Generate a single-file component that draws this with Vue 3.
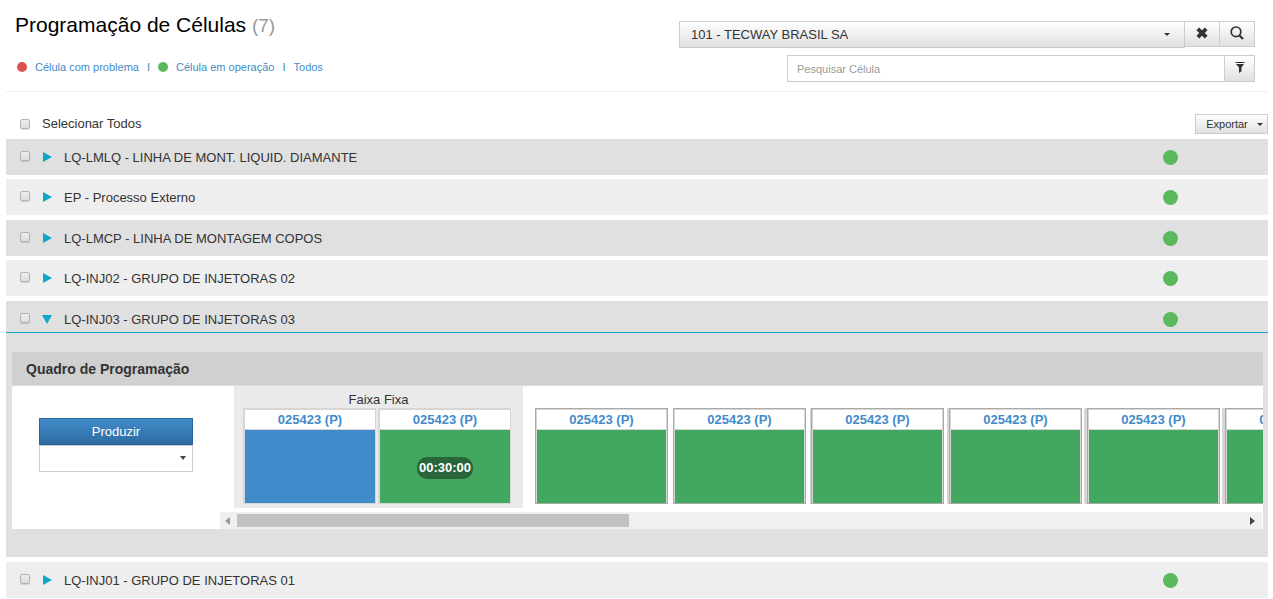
<script setup>
import { ref } from 'vue'

const cells = [
  { name: 'LQ-LMLQ - LINHA DE MONT. LIQUID. DIAMANTE' },
  { name: 'EP - Processo Externo' },
  { name: 'LQ-LMCP - LINHA DE MONTAGEM COPOS' },
  { name: 'LQ-INJ02 - GRUPO DE INJETORAS 02' },
  { name: 'LQ-INJ03 - GRUPO DE INJETORAS 03', open: true },
  { name: 'LQ-INJ01 - GRUPO DE INJETORAS 01' }
]
const queue = [0, 0, 1, 2, 3, 3]
const search = ref('')
</script>

<template>
  <main class="page">
    <header class="head">
      <div class="intro">
        <h1>Programação de Células <small>(7)</small></h1>
        <nav class="legend">
          <i class="dot red"></i><a href="#">Célula com problema</a>
          <span class="sep">I</span>
          <i class="dot"></i><a href="#">Célula em operação</a>
          <span class="sep">I</span>
          <a href="#">Todos</a>
        </nav>
      </div>
      <div class="tools">
        <div class="company">
          <div class="pick">
            <select aria-label="Empresa"><option>101 - TECWAY BRASIL SA</option></select>
            <i class="caret"></i>
          </div>
          <button class="btn" type="button" aria-label="Limpar">
            <svg width="12" height="12" viewBox="0 0 12 12"><path d="M1.800 1.800L10.200 10.200M10.200 1.800L1.800 10.200" stroke="#333" stroke-width="3.8" /></svg>
          </button>
          <button class="btn" type="button" aria-label="Buscar">
            <svg width="14" height="14" viewBox="0 0 14 14"><circle cx="6" cy="5.8" r="4.8" fill="none" stroke="#333" stroke-width="1.7" /><path d="M9.500 9.500L13 13" stroke="#333" stroke-width="2.2" /></svg>
          </button>
        </div>
        <div class="search">
          <input v-model="search" type="text" placeholder="Pesquisar Célula" aria-label="Pesquisar Célula" />
          <button class="btn" type="button" aria-label="Filtrar">
            <svg width="10" height="11" viewBox="0 0 10 11"><path d="M0.500 0H9.500V1H0.500ZM1 2H9L6.500 5.500V9.200L4 11V5.500Z" fill="#333" /></svg>
          </button>
        </div>
      </div>
    </header>

    <div class="bar">
      <label><input class="check" type="checkbox" />Selecionar Todos</label>
      <button class="btn export" type="button">Exportar<i class="caret"></i></button>
    </div>

    <section class="cells">
      <article v-for="(cell, i) in cells" :key="i" class="cell" :class="{ open: cell.open }">
        <div class="row">
          <label><input class="check" type="checkbox" :aria-label="cell.name" /></label>
          <button class="toggle" type="button" aria-label="Expandir"><i></i></button>
          <span class="name">{{ cell.name }}</span>
          <i class="status"></i>
        </div>
        <div v-if="cell.open" class="detail">
          <h2>Quadro de Programação</h2>
          <div class="board">
            <div class="actions">
              <button class="produce" type="button">Produzir</button>
              <div class="pick">
                <select class="mode" aria-label="Modo"><option></option></select>
                <i class="arrow"></i>
              </div>
            </div>
            <div class="timeline">
              <div class="lanes">
                <div class="fixed">
                  <p>Faixa Fixa</p>
                  <div class="pair">
                    <div class="card blue"><a href="#">025423 (P)</a><div class="fill"></div></div>
                    <div class="card"><a href="#">025423 (P)</a><div class="fill"><span class="time">00:30:00</span></div></div>
                  </div>
                </div>
                <div class="free">
                  <div v-for="(n, k) in queue" :key="k" class="slot" :class="'edge' + n">
                    <div class="card"><a href="#">025423 (P)</a><div class="fill"></div></div>
                  </div>
                </div>
              </div>
              <div class="scroll">
                <i class="back"></i>
                <div class="track"><div class="thumb"></div></div>
                <i class="next"></i>
              </div>
            </div>
          </div>
        </div>
      </article>
    </section>
  </main>
</template>

<style>
body { background: #fff; }
</style>

<style scoped>
* { box-sizing: border-box; }
.page { font: 13px/18px "Liberation Sans", Arial, sans-serif; color: #333; padding: 0 5px 0 6px; overflow: hidden; }
button, input, select { font: inherit; color: inherit; margin: 0; border-radius: 0; }
a { color: #428bca; text-decoration: none; }
.head { display: grid; grid-template-columns: 7fr 6fr; column-gap: 1px; height: 92px; padding-right: 13px; border-bottom: 1px solid #eee; }
h1 { margin: 12px 0 0 9px; font-size: 21px; line-height: 26px; font-weight: 400; color: #000; }
h1 small { font-size: 19px; color: #999; }
.legend { display: flex; align-items: center; margin: 20px 0 0 11px; font-size: 11px; line-height: 16px; color: #428bca; }
.dot { width: 10px; height: 10px; border-radius: 50%; background: #5cb85c; margin-right: 8px; }
.dot.red { background: #d9534f; }
.sep { margin: 0 8px; }
.tools { padding-top: 21px; display: flex; flex-direction: column; align-items: flex-end; gap: 7px; }
.company { display: flex; width: 100%; align-items: flex-start; }
.pick { position: relative; flex: 1; }
.pick select { appearance: none; width: 100%; height: 27px; padding: 0 11px; border: 1px solid #ccc; background: linear-gradient(#fff, #e0e0e0); display: block; }
.caret { border: 3px solid transparent; border-top-color: #333; border-bottom: 0; }
.pick .caret { position: absolute; right: 15px; top: 12px; }
.btn { border: 1px solid #ccc; background: linear-gradient(#fff, #e0e0e0); padding: 0; display: flex; align-items: center; justify-content: center; }
.company .btn { width: 36px; height: 26px; margin-left: -1px; padding-bottom: 3px; }
.search { display: flex; width: 81.25%; }
.search input { flex: 1; height: 27px; border: 1px solid #ccc; padding: 0 9px; font-size: 11px; outline: 0; }
.search input::placeholder { color: #999; opacity: 1; }
.search .btn { width: 31px; height: 27px; margin-left: -1px; padding-bottom: 3px; }
.bar { display: flex; justify-content: space-between; height: 47px; padding-top: 22px; }
.bar label { display: flex; align-items: center; height: 20px; padding-left: 14px; }
.check { appearance: none; width: 10px; height: 10px; border: 1px solid #b3b3b3; border-radius: 2px; background: linear-gradient(#eee, #ddd); box-shadow: 0 1px 1px #0002; display: block; }
.bar .check { margin-right: 12px; }
.export { width: 73px; height: 20px; font-size: 11px; gap: 9px; padding-left: 6px; }
.cell { background: #e0e0e0; margin-bottom: 4px; }
.cell:nth-child(even) { background: #eee; margin-bottom: 5px; }
.cell.open { margin-bottom: 5px; }
.row { display: flex; align-items: center; height: 36px; padding-left: 14px; }
.row label { padding-bottom: 2px; }
.open .row { height: 32px; padding-top: 5px; border-bottom: 1px solid #0fa6c8; }
.toggle { width: 12px; height: 12px; margin-left: 11px; padding: 0; border: 0; background: none; display: flex; align-items: center; justify-content: center; }
.toggle i { border: 5px solid transparent; border-left: 9px solid #0fa6c8; border-right: 0; }
.open .toggle i { border: 5px solid transparent; border-top: 9px solid #0fa6c8; border-bottom: 0; }
.name { flex: 1; margin-left: 11px; padding-top: 1px; }
.status { width: 15px; height: 15px; border-radius: 50%; background: #5cb85c; margin-right: 90px; }
.detail { padding: 19px 5px 28px 6px; }
h2 { margin: 0; height: 34px; padding-left: 14px; background: #d0d0d0; border-bottom: 1px solid #ddd; font-size: 14px; line-height: 34px; }
.board { display: flex; background: #fff; height: 143px; }
.actions { width: 154px; margin: 32px 27px 0; flex: none; }
.produce { width: 100%; height: 27px; display: block; border: 1px solid #2b669a; color: #fff; background: linear-gradient(#428bca, #2d6ca2); }
.pick .mode { background: #fff; }
.arrow { position: absolute; right: 7px; top: 11px; border: 3px solid transparent; border-top: 4px solid #444; border-bottom: 0; }
.timeline { flex: 1; min-width: 0; overflow: hidden; }
.lanes { display: flex; height: 126px; padding-left: 14px; }
.fixed { flex: none; width: 289px; height: 122px; padding: 5px 9px; background: #eaeaea; }
.fixed p { margin: 0; line-height: 17px; text-align: center; }
.pair { display: flex; gap: 2px; }
.card { width: 133px; height: 96px; flex: none; border: 2px solid #d6d6d6; border-width: 2px 1px 1px 2px; }
.card a { display: block; height: 20px; line-height: 20px; text-align: center; font-weight: 700; background: #fff; border-bottom: 1px solid #d6d6d6; }
.fill { height: 73px; background: #43a85f; display: flex; align-items: center; justify-content: center; }
.blue .fill { background: #428bca; }
.time { padding: 0 2px; margin-top: 2px; height: 22px; line-height: 22px; border-radius: 10px; background: #28653a; color: #fff; font-weight: 700; }
.free { display: flex; gap: 5px; margin: 22px 0 0 12px; }
.slot { height: 96px; }
.free .card { border: 1px solid #aaa; box-shadow: inset 0 0 0 1px #d6d6d6; padding: 1px 1px 0; }
.edge1 { box-shadow: -1px 0 #d6d6d6; }
.edge2 { box-shadow: -2px 0 #d6d6d6; }
.edge3 { box-shadow: -3px 0 #d6d6d6; }
.scroll { display: flex; align-items: center; height: 17px; background: #f0f0f0; margin-right: 1px; padding: 0 7px 0 5px; }
.back { border: 4px solid transparent; border-right: 5px solid #999; border-left: 0; }
.next { border: 4px solid transparent; border-left: 5px solid #444; border-right: 0; }
.track { flex: 1; margin: 0 7px; }
.thumb { width: 39%; height: 13px; background: #c1c1c1; }
</style>
